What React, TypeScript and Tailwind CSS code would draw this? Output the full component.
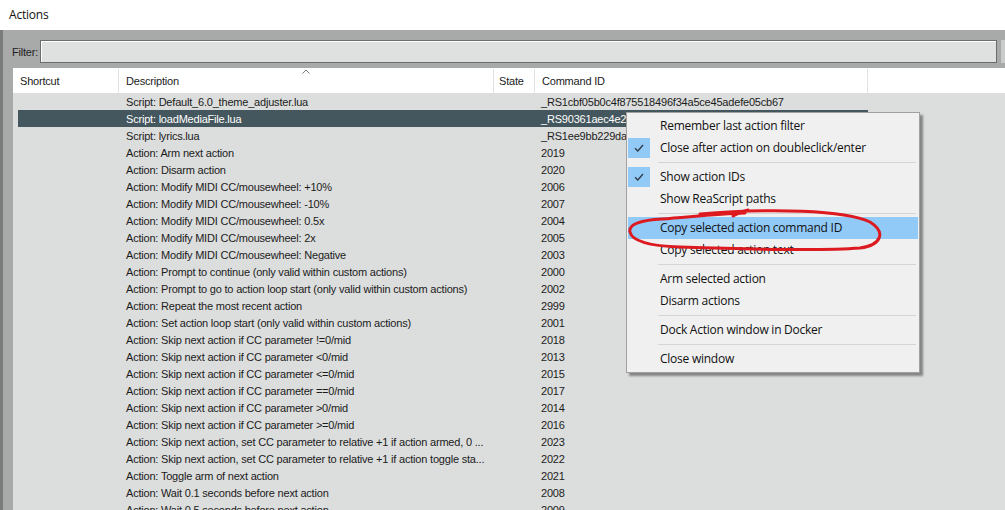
import React from "react";

const rows: [string, string][] = [
  ["Script: Default_6.0_theme_adjuster.lua", "_RS1cbf05b0c4f875518496f34a5ce45adefe05cb67"],
  ["Script: loadMediaFile.lua", "_RS90361aec4e2b7a1c0f3e8d94b6a5c71f2e0d83a9"],
  ["Script: lyrics.lua", "_RS1ee9bb229da4c1e07b35f9a28d6e140c3b7f2a95"],
  ["Action: Arm next action", "2019"],
  ["Action: Disarm action", "2020"],
  ["Action: Modify MIDI CC/mousewheel: +10%", "2006"],
  ["Action: Modify MIDI CC/mousewheel: -10%", "2007"],
  ["Action: Modify MIDI CC/mousewheel: 0.5x", "2004"],
  ["Action: Modify MIDI CC/mousewheel: 2x", "2005"],
  ["Action: Modify MIDI CC/mousewheel: Negative", "2003"],
  ["Action: Prompt to continue (only valid within custom actions)", "2000"],
  ["Action: Prompt to go to action loop start (only valid within custom actions)", "2002"],
  ["Action: Repeat the most recent action", "2999"],
  ["Action: Set action loop start (only valid within custom actions)", "2001"],
  ["Action: Skip next action if CC parameter !=0/mid", "2018"],
  ["Action: Skip next action if CC parameter <0/mid", "2013"],
  ["Action: Skip next action if CC parameter <=0/mid", "2015"],
  ["Action: Skip next action if CC parameter ==0/mid", "2017"],
  ["Action: Skip next action if CC parameter >0/mid", "2014"],
  ["Action: Skip next action if CC parameter >=0/mid", "2016"],
  ["Action: Skip next action, set CC parameter to relative +1 if action armed, 0 ...", "2023"],
  ["Action: Skip next action, set CC parameter to relative +1 if action toggle sta...", "2022"],
  ["Action: Toggle arm of next action", "2021"],
  ["Action: Wait 0.1 seconds before next action", "2008"],
  ["Action: Wait 0.5 seconds before next action", "2009"],
];

type MenuEntry = { label?: string; checked?: boolean; active?: boolean; sep?: boolean };

const menu: MenuEntry[] = [
  { label: "Remember last action filter" },
  { label: "Close after action on doubleclick/enter", checked: true },
  { sep: true },
  { label: "Show action IDs", checked: true },
  { label: "Show ReaScript paths" },
  { sep: true },
  { label: "Copy selected action command ID", active: true },
  { label: "Copy selected action text" },
  { sep: true },
  { label: "Arm selected action" },
  { label: "Disarm actions" },
  { sep: true },
  { label: "Dock Action window in Docker" },
  { sep: true },
  { label: "Close window" },
];

function Check() {
  return (
    <svg width="10" height="8" viewBox="0 0 10 8">
      <path d="M1 4.2 L3.8 7 L9 1" fill="none" stroke="#2f3a44" strokeWidth="1.3" />
    </svg>
  );
}

function ContextMenu() {
  return (
    <div className="absolute left-[626px] top-[112px] w-[294px] bg-[#f0f0f0] border border-[#a0a0a0] px-[1px] pt-[2px] pb-[2px] shadow-[3px_3px_2px_rgba(0,0,0,0.4)] font-['Open_Sans',sans-serif] text-[12px] tracking-[-0.25px] text-[#111]">
      {menu.map((m, i) =>
        m.sep ? (
          <div key={i} className="h-[7px] flex items-center pl-[30px] pr-[2px]">
            <div className="h-[1px] w-full bg-[#d5d5d5]" />
          </div>
        ) : (
          <div
            key={i}
            className={
              "h-[22px] flex items-center " + (m.active ? "bg-[#91c9f7]" : "")
            }
          >
            <div className="w-[22px] h-[20px] mr-[10px] flex items-center justify-center">
              {m.checked && (
                <div className="w-[22px] h-[20px] bg-[#91c9f7] flex items-center justify-center">
                  <Check />
                </div>
              )}
            </div>
            <span>{m.label}</span>
          </div>
        )
      )}
    </div>
  );
}

export default function App() {
  return (
    <div className="relative w-[1005px] h-[510px] overflow-hidden bg-[#a8aaaa] font-['Liberation_Sans',Arial,sans-serif] text-[11px] tracking-[-0.2px] text-[#1b1b1b]">
      <div className="h-[30px] bg-white flex items-center pl-[9px] font-['Open_Sans',sans-serif] text-[12px] tracking-[-0.2px] text-[#111]">
        Actions
      </div>
      <div className="h-[480px] border-l-[3px] border-[#7a7c7c] flex flex-col">
        <div className="flex items-center h-[23px] mt-[10px]">
          <span className="pl-[9px] w-[37px] text-[#222] pt-[1px]">Filter:</span>
          <div className="h-[23px] w-[960px] bg-[#dfe1e0] border border-[#6b6d6d] shadow-[inset_1px_1px_0_#ffffff]" />
          <div className="ml-[4px] h-[23px] w-[4px] bg-[#c9cbcb]" />
        </div>
        <div className="mt-[5px] ml-[10px] flex-1 bg-[#dcdedd] flex flex-col">
          <div className="h-[25px] bg-white flex items-center pt-[1px]">
            <div className="w-[106px] h-full flex items-center pl-[7px] border-r border-[#e3e3e3]">Shortcut</div>
            <div className="relative w-[375px] h-full flex items-center pl-[7px] border-r border-[#e3e3e3]">
              Description
              <svg className="absolute left-[183px] top-[0px]" width="8" height="5" viewBox="0 0 8 5">
                <path d="M0.5 4.5 L4 1 L7.5 4.5" fill="none" stroke="#777" strokeWidth="1" />
              </svg>
            </div>
            <div className="w-[41px] h-full flex items-center pl-[5px] border-r border-[#e3e3e3]">State</div>
            <div className="w-[333px] h-full flex items-center pl-[7px] border-r border-[#e3e3e3]">Command ID</div>
          </div>
          {rows.map(([desc, id], i) => (
            <div key={i} className="h-[17px] flex pl-[5px]">
              <div
                className={
                  "w-[850px] h-full flex items-center pt-[1px] whitespace-nowrap overflow-hidden " +
                  (i === 1 ? "bg-[#44575e] text-white" : "")
                }
              >
                <div className="w-[101px] shrink-0" />
                <div className="w-[375px] shrink-0 pl-[7px] overflow-hidden">{desc}</div>
                <div className="w-[41px] shrink-0" />
                <div className="w-[333px] shrink-0 pl-[6px] overflow-hidden">{id}</div>
              </div>
            </div>
          ))}
        </div>
      </div>
      <ContextMenu />
      <svg className="absolute left-0 top-0 pointer-events-none" width="1005" height="510" viewBox="0 0 1005 510">
        <path
          d="M748 210 Q740 212 733 216"
          fill="none"
          stroke="#dc1a20"
          strokeWidth="3"
          strokeLinecap="round"
        />
        <path
          d="M700 214 C770 208 845 210 870 222 C886 232 882 245 860 248 C820 251 740 249 680 247 C650 246 632 241 630 232 C628 224 642 220 662 219 C690 217 715 214 745 213"
          fill="none"
          stroke="#dc1a20"
          strokeWidth="3"
          strokeLinecap="round"
        />
      </svg>
    </div>
  );
}
